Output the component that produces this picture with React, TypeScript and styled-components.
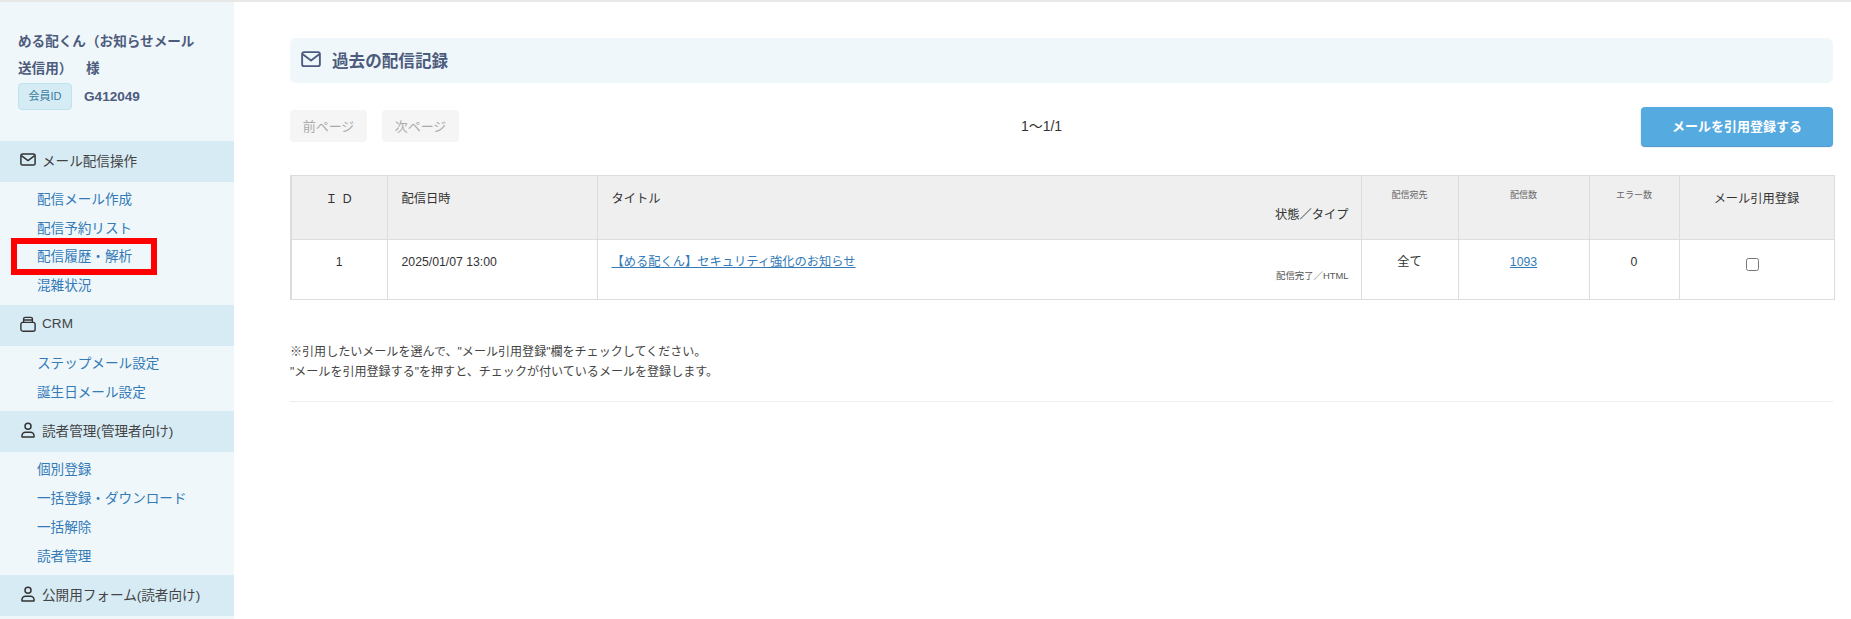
import React from 'react';
import styled, { createGlobalStyle } from 'styled-components';

const GlobalStyle = createGlobalStyle`
  html, body {
    margin: 0;
    padding: 0;
    background: #fff;
    font-family: "Liberation Sans", "Noto Sans CJK JP", sans-serif;
    color: #333;
    text-spacing-trim: space-all;
  }
`;

const Page = styled.div`
  display: flex;
  height: 619px;
  overflow: hidden;
  box-sizing: border-box;
  border-top: 2px solid #e8e8e8;
`;

const Sidebar = styled.aside`
  width: 234px;
  flex-shrink: 0;
  background: #eff7fb;
  overflow: hidden;
`;

const Profile = styled.div`
  padding: 26px 30px 31px 18px;
  color: #4d5b7c;
  font-size: 13.6px;
  font-weight: 700;
  line-height: 27px;
`;

const MemberRow = styled.div`
  display: flex;
  align-items: center;
  gap: 12px;
  margin-top: 1px;
`;

const Badge = styled.span`
  box-sizing: border-box;
  width: 54px;
  height: 27px;
  display: flex;
  align-items: center;
  justify-content: center;
  background: #d6ecf4;
  border: 1px solid #bde3ee;
  border-radius: 4px;
  color: #3a7ca0;
  font-size: 11px;
  font-weight: 400;
`;

const SectionHeader = styled.div`
  height: 40.8px;
  box-sizing: border-box;
  display: flex;
  align-items: center;
  gap: 6px;
  padding: 0 0 3px 20px;
  background: #d7ebf5;
  color: #444;
  font-size: 13.6px;
`;

const IconSlot = styled.span`
  width: 16px;
  height: 16px;
  display: flex;
  align-items: center;
  justify-content: center;
  color: #333;
  flex-shrink: 0;
`;

const ItemList = styled.ul`
  list-style: none;
  margin: 0;
  padding: 4px 0;
`;

const Item = styled.li`
  position: relative;
  height: 28.8px;
  line-height: 28.8px;
  padding-left: 37px;
  font-size: 13.6px;
  color: #337ab7;
`;

const RedBox = styled.span`
  position: absolute;
  left: 11px;
  top: -5px;
  width: 146px;
  height: 37px;
  box-sizing: border-box;
  border: 6px solid #f00;
`;

const Main = styled.main`
  flex: 1;
  padding: 36px 18px 0 56px;
  min-width: 0;
`;

const TitleBar = styled.h2`
  margin: 0;
  height: 45px;
  box-sizing: border-box;
  display: flex;
  align-items: center;
  gap: 11px;
  padding: 0 0 2px 11px;
  background: #eff7fb;
  border-radius: 6px;
  color: #4d5b7c;
  font-size: 16.6px;
  font-weight: 700;
`;

const Toolbar = styled.div`
  display: flex;
  align-items: center;
  justify-content: space-between;
  height: 41px;
  margin-top: 23px;
  margin-bottom: 28px;
`;

const PagerGroup = styled.div`
  display: flex;
  gap: 15px;
  margin-top: -2px;
`;

const PagerButton = styled.span`
  width: 77px;
  height: 32px;
  display: flex;
  align-items: center;
  justify-content: center;
  background: #f5f5f5;
  border-radius: 4px;
  color: #aaa;
  font-size: 13px;
`;

const PageCount = styled.span`
  font-size: 14px;
  color: #333;
  margin: -3px 17px 0 0;
`;

const CopyButton = styled.span`
  width: 192px;
  height: 39px;
  box-sizing: border-box;
  padding-bottom: 2px;
  display: flex;
  align-items: center;
  justify-content: center;
  background: #55aae0;
  border-radius: 4px;
  box-shadow: 0 1px 1px #4a8fc0;
  color: #fff;
  font-size: 13px;
  font-weight: 700;
`;

const Table = styled.table`
  width: 100%;
  table-layout: fixed;
  border-collapse: collapse;
  border: 1px solid #ddd;
  border-left-width: 2px;
  font-size: 12.25px;
`;

const HeadCell = styled.th<{ $small?: boolean; $left?: boolean }>`
  height: 64px;
  box-sizing: border-box;
  padding: ${p => (p.$small ? '10px' : '14px')} 12px 0 ${p => (p.$left ? '14px' : '12px')};
  vertical-align: top;
  background: #efefef;
  border: 1px solid #ddd;
  border-top: 0;
  border-bottom: 0;
  font-weight: 400;
  line-height: 18px;
  color: ${p => (p.$small ? '#666' : '#333')};
  font-size: ${p => (p.$small ? '9px' : '12.25px')};
  text-align: ${p => (p.$left ? 'left' : 'center')};
`;

const SubLabel = styled.div`
  text-align: right;
  margin-top: -2px;
`;

const BodyCell = styled.td<{ $left?: boolean }>`
  height: 60px;
  box-sizing: border-box;
  padding: 13px 12px 0 ${p => (p.$left ? '14px' : '12px')};
  vertical-align: top;
  border: 1px solid #ddd;
  line-height: 18px;
  text-align: ${p => (p.$left ? 'left' : 'center')};
  a {
    color: #337ab7;
    text-decoration: underline;
  }
`;

const SubValue = styled.div`
  text-align: right;
  font-size: 9.4px;
  color: #555;
  line-height: 14px;
  margin-top: -2px;
`;

const Check = styled.input`
  width: 13px;
  height: 13px;
  margin: 5px 8px 0 0;
`;

const Note = styled.div`
  margin-top: 42px;
  padding-bottom: 19px;
  border-bottom: 1px solid #eee;
  font-size: 12.05px;
  line-height: 20px;
  color: #444;
`;

const MailIcon = ({ width = 16 }: { width?: number }) => (
  <svg width={width} height={(width * 13) / 16} viewBox="0 0 16 13" fill="none" stroke="currentColor" strokeWidth="1.5" strokeLinejoin="round">
    <rect x="0.9" y="0.9" width="14.2" height="11.2" rx="1.6" />
    <path d="M1.4 2.6 8 7.6l6.6-5" />
  </svg>
);

const BoxIcon = () => (
  <svg width="16" height="16" viewBox="0 0 16 16" fill="none" stroke="currentColor" strokeWidth="1.4" strokeLinejoin="round">
    <rect x="0.9" y="6.4" width="14.2" height="8.8" rx="2" />
    <path d="M3.6 6.4V3a1.6 1.6 0 0 1 1.6-1.6h5.6A1.6 1.6 0 0 1 12.4 3v3.4M3.6 4h8.8" />
  </svg>
);

const PersonIcon = () => (
  <svg width="14" height="16" viewBox="0 0 14 16" fill="none" stroke="currentColor" strokeWidth="1.5" strokeLinejoin="round">
    <circle cx="7" cy="4.2" r="3" />
    <path d="M1 15v-1.4a3.4 3.4 0 0 1 3.4-3.4h5.2a3.4 3.4 0 0 1 3.4 3.4V15z" />
  </svg>
);

const COLUMNS = [96, 210, 764, 97, 131, 90, 155];

const NAV = [
  { label: 'メール配信操作', icon: <MailIcon />, items: ['配信メール作成', '配信予約リスト', '配信履歴・解析', '混雑状況'] },
  { label: 'CRM', icon: <BoxIcon />, items: ['ステップメール設定', '誕生日メール設定'] },
  { label: '読者管理(管理者向け)', icon: <PersonIcon />, items: ['個別登録', '一括登録・ダウンロード', '一括解除', '読者管理'] },
  { label: '公開用フォーム(読者向け)', icon: <PersonIcon />, items: [] as string[] },
];

const App = () => {
  return (
    <Page>
      <GlobalStyle />
      <Sidebar>
        <Profile>
          <div>める配くん（お知らせメール送信用）　様</div>
          <MemberRow>
            <Badge>会員ID</Badge>
            G412049
          </MemberRow>
        </Profile>
        {NAV.map(section => (
          <div key={section.label}>
            <SectionHeader>
              <IconSlot>{section.icon}</IconSlot>
              {section.label}
            </SectionHeader>
            {section.items.length > 0 && (
              <ItemList>
                {section.items.map(item => (
                  <Item key={item}>
                    {item}
                    {item === '配信履歴・解析' && <RedBox />}
                  </Item>
                ))}
              </ItemList>
            )}
          </div>
        ))}
      </Sidebar>
      <Main>
        <TitleBar>
          <MailIcon width={20} />
          過去の配信記録
        </TitleBar>
        <Toolbar>
          <PagerGroup>
            <PagerButton>前ページ</PagerButton>
            <PagerButton>次ページ</PagerButton>
          </PagerGroup>
          <PageCount>1〜1/1</PageCount>
          <CopyButton>メールを引用登録する</CopyButton>
        </Toolbar>
        <Table>
          <colgroup>
            {COLUMNS.map((w, i) => (
              <col key={i} style={{ width: w }} />
            ))}
          </colgroup>
          <thead>
            <tr>
              <HeadCell>Ｉ Ｄ</HeadCell>
              <HeadCell $left>配信日時</HeadCell>
              <HeadCell $left>
                タイトル
                <SubLabel>状態／タイプ</SubLabel>
              </HeadCell>
              <HeadCell $small>配信宛先</HeadCell>
              <HeadCell $small>配信数</HeadCell>
              <HeadCell $small>エラー数</HeadCell>
              <HeadCell>メール引用登録</HeadCell>
            </tr>
          </thead>
          <tbody>
            <tr>
              <BodyCell>1</BodyCell>
              <BodyCell $left>2025/01/07 13:00</BodyCell>
              <BodyCell $left>
                <a href="#">【める配くん】セキュリティ強化のお知らせ</a>
                <SubValue>配信完了／HTML</SubValue>
              </BodyCell>
              <BodyCell>全て</BodyCell>
              <BodyCell>
                <a href="#">1093</a>
              </BodyCell>
              <BodyCell>0</BodyCell>
              <BodyCell>
                <Check type="checkbox" />
              </BodyCell>
            </tr>
          </tbody>
        </Table>
        <Note>
          ※引用したいメールを選んで、"メール引用登録"欄をチェックしてください。
          <br />
          "メールを引用登録する"を押すと、チェックが付いているメールを登録します。
        </Note>
      </Main>
    </Page>
  );
};

export default App;
